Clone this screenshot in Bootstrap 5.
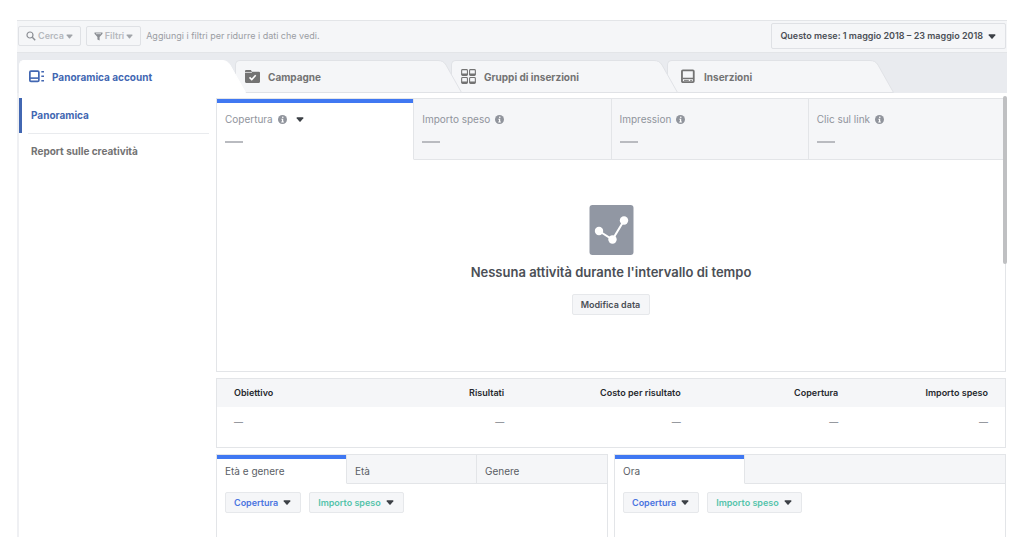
<!DOCTYPE html>
<html lang="it">
<head>
<meta charset="utf-8">
<meta name="viewport" content="width=device-width, initial-scale=1">
<title>Gestione inserzioni</title>
<link href="https://cdn.jsdelivr.net/npm/bootstrap@5.3.0/dist/css/bootstrap.min.css" rel="stylesheet">
<style>
  :root { --line: #e3e5e8; --panel: #f5f6f8; --strip: #e9ebef; --navy: #4267b2; --accent: #4078f2; }
  body { font-family: Inter, "Liberation Sans", sans-serif; font-size: 10px; line-height: 16px; color: #4b4f56; background: #fff; }
  .page { min-height: 100vh; padding: 20px 17px 13px; }
  .toolbar { background: var(--panel); border: solid var(--line); border-width: 1px 0; padding: 2px 1px 3px; gap: 5px; }
  .tool-btn { display: inline-flex; align-items: center; gap: 5px; background: var(--panel); border: 1px solid #dfe1e5; border-radius: 2px; font-size: 9px; line-height: 14px; font-weight: 600; padding: 2px 9px 2px 8px; white-space: nowrap; height: 20px; color: #4b4f56; }
  .tool-btn.muted { color: #b6b9be; padding: 2px 7px; gap: 2px; }
  .tool-btn.muted .caret { width: 7px; color: #a2a5aa; }
  .hint { color: #9a9da3; font-size: 9px; }
  .tool-btn.date-btn { height: 26px; }
  .caret { width: 8px; height: 5px; flex: none; fill: currentColor; }
  .dark-caret { color: #3c4046; }
  .tab-strip { background: var(--strip); padding: 7px 0 0 2px; }
  .level-tab { position: relative; flex: 0 1 228px; height: 33px; margin-right: -12px; color: #737373; font-weight: 700; text-decoration: none; padding-left: 10px; display: flex; align-items: center; }
  .level-tab .shape-body { position: absolute; inset: 0 30px 0 0; background: var(--panel); border: solid #e0e2e6; border-width: 1px 0 1px 1px; border-radius: 5px 0 0 0; }
  .level-tab .shape-cap { position: absolute; right: 0; top: 0; width: 30px; height: 33px; fill: var(--panel); stroke: #e0e2e6; }
  .level-tab.active { color: var(--navy); }
  .level-tab.active .shape-body { background: #fff; border-color: #fff; }
  .level-tab.active .shape-cap { fill: #fff; stroke: #fff; }
  .level-tab .content { position: relative; display: flex; align-items: center; gap: 8px; }
  .level-tab .glyph { width: 15px; height: 15px; }
  .workspace { border-left: 2px solid #eff0f3; padding-top: 5px; }
  .side { width: 197px; flex: none; padding-right: 7px; }
  .side a { display: block; text-decoration: none; font-weight: 700; color: #737373; padding: 9px 0 10px 9px; border-left: 3px solid transparent; }
  .side a.active { color: var(--navy); border-color: var(--navy); }
  .side .rule { height: 1px; background: #e9ebee; margin-left: 9px; }
  .main { min-width: 0; padding-right: 1px; gap: 6px; position: relative; }
  .panel { border: 1px solid var(--line); background: #fff; }
  .scroll-thumb { position: absolute; right: 0; top: -2px; width: 4px; height: 168px; border-radius: 2px; background: #bfc0c2; }
  .metric { flex: 1 1 0; min-width: 0; height: 61px; display: flex; flex-direction: column; justify-content: flex-start; background: var(--panel); border: 0; border-right: 1px solid var(--line); border-bottom: 1px solid var(--line); padding: 12px 8px 0; color: #90949c; }
  .metric:last-child { border-right: 0; }
  .metric .title { display: flex; align-items: center; gap: 5px; }
  .metric .dash { width: 18px; height: 2px; background: #b9bbc0; margin-top: 14px; }
  .metric.active, .break-tab.active { background: #fff; border-bottom-color: #fff; box-shadow: inset 0 4px 0 var(--accent); }
  .info { width: 9px; height: 9px; }
  .empty { padding: 45px 0 56px; }
  .empty .chart { width: 45px; height: 50px; }
  .empty h2 { font-size: 13px; line-height: 18px; font-weight: 600; margin: 8px 0 13px; color: #4b4f56; }
  .results { width: 100%; font-size: 9px; table-layout: fixed; }
  .results th { background: var(--panel); color: #26292e; font-weight: 600; padding: 6px 17px; height: 28px; white-space: nowrap; }
  .results td { padding: 7px 17px 0; height: 40px; vertical-align: top; color: #96999f; font-weight: 600; }
  .results th + th, .results td + td { text-align: right; }
  .break-tab { flex: none; width: 33.333%; height: 29px; text-align: left; border: 0; border-right: 1px solid var(--line); border-bottom: 1px solid var(--line); background: var(--panel); color: #5a5e65; padding: 4px 8px 0; }
  .break-tab:last-child { border-right: 0; }
  .break-rest { flex: 1; background: var(--panel); border-bottom: 1px solid var(--line); }
  .cut { border-bottom: 0; flex: 1 1 0; min-width: 0; }
  .breakdowns { gap: 6px; }
  .tool-btn.pick { border-color: #e6e8eb; height: 21px; }
  .tool-btn.reach { color: #4a74e0; }
  .tool-btn.spend { color: #55c4ab; }
</style>
</head>
<body>
<svg width="0" height="0" class="position-absolute" aria-hidden="true">
  <symbol id="caret" viewBox="0 0 8 5"><path d="M1.200.2h5.600q1 .1.500 1L4.600 4.400q-.6.500-1.200 0L.7 1.200Q.2.300 1.200.2z"/></symbol>
  <symbol id="info" viewBox="0 0 10 10"><circle cx="5" cy="5" r="5" fill="#90949c"/><circle cx="5.300" cy="2.500" r=".9" fill="#fff"/><path d="M3.800 4.200h2v3h.7v1H3.600v-1h.8v-2h-.6z" fill="#fff"/></symbol>
  <symbol id="cap" viewBox="0 0 30 33"><path d="M0 .5H5Q10.500.5 13 5L28.500 32.500H0" /></symbol>
</svg>

<div class="page d-flex flex-column">
  <header class="toolbar d-flex align-items-center">
    <button type="button" class="tool-btn muted">
      <svg width="10" height="10" viewBox="0 0 10 10" fill="none" stroke="#8b8e94" aria-hidden="true"><circle cx="4" cy="4" r="3" stroke-width="1.200"/><path d="M6.300 6.300 9.200 9.200" stroke-width="1.500"/></svg>
      Cerca <svg class="caret"><use href="#caret"/></svg>
    </button>
    <button type="button" class="tool-btn muted">
      <svg width="9" height="9" viewBox="0 0 9 9" aria-hidden="true"><path d="M.5.5h8v1.300L5.600 5v3.500L3.400 7.500V5L.5 1.800z" fill="#8b8e94"/><path d="M2 1.700h5" stroke="#f5f6f8" stroke-width=".7"/></svg>
      Filtri <svg class="caret"><use href="#caret"/></svg>
    </button>
    <span class="hint">Aggiungi i filtri per ridurre i dati che vedi.</span>
    <button type="button" class="tool-btn date-btn ms-auto">Questo mese: 1 maggio 2018 – 23 maggio 2018 <svg class="caret dark-caret"><use href="#caret"/></svg></button>
  </header>

  <nav class="tab-strip d-flex" aria-label="Livelli">
    <a href="#" class="level-tab active z-3" aria-current="page"><span class="shape-body"></span><svg class="shape-cap"><use href="#cap"/></svg>
      <span class="content"><svg class="glyph" viewBox="0 0 14 14" aria-hidden="true"><rect x=".8" y="2" width="8.400" height="9.500" rx="1" fill="none" stroke="currentColor" stroke-width="1.600"/><path d="M1 8.500h8" stroke="currentColor" stroke-width="1.500"/><path d="M11.500 2.500h2.500M11.500 6.700h2.500M11.500 11h2.500" stroke="currentColor" stroke-width="1.500"/></svg>Panoramica account</span></a>
    <a href="#" class="level-tab z-2"><span class="shape-body"></span><svg class="shape-cap"><use href="#cap"/></svg>
      <span class="content"><svg class="glyph" viewBox="0 0 14 14" aria-hidden="true"><path d="M0 2q0-1 1-1h4.500l1 1.500H13q1 0 1 1V12q0 1-1 1H1q-1 0-1-1z" fill="currentColor"/><path d="M0 3.200h6.500" stroke="#f5f6f8" stroke-width=".7"/><path d="m4.200 7.800 2.100 2 3.700-4" fill="none" stroke="#fff" stroke-width="1.500"/></svg>Campagne</span></a>
    <a href="#" class="level-tab z-1"><span class="shape-body"></span><svg class="shape-cap"><use href="#cap"/></svg>
      <span class="content"><svg class="glyph" viewBox="0 0 14 14" fill="none" stroke="currentColor" aria-hidden="true"><rect x=".6" y=".6" width="5.400" height="5.400" rx=".8"/><rect x="8" y=".6" width="5.400" height="5.400" rx=".8"/><rect x=".6" y="8" width="5.400" height="5.400" rx=".8"/><rect x="8" y="8" width="5.400" height="5.400" rx=".8"/><path d="M.6 4.900h5.400M8 4.900h5.400M.6 12.300h5.400M8 12.300h5.400" stroke-width="1.500"/></svg>Gruppi di inserzioni</span></a>
    <a href="#" class="level-tab z-0"><span class="shape-body"></span><svg class="shape-cap"><use href="#cap"/></svg>
      <span class="content ms-1"><svg class="glyph" viewBox="0 0 14 14" fill="none" stroke="currentColor" aria-hidden="true"><rect x=".9" y="1.200" width="11" height="11" rx=".8" stroke-width="1.700"/><path d="M1.500 8.800h10" stroke-width="1.300"/><path d="M2.800 10.600h4.500M8.500 10.600h1.800" stroke-width=".9"/></svg>Inserzioni</span></a>
  </nav>

  <div class="workspace d-flex flex-grow-1">
    <nav class="side" aria-label="Sezioni">
      <a href="#" class="active">Panoramica</a>
      <div class="rule"></div>
      <a href="#">Report sulle creatività</a>
    </nav>

    <main class="main d-flex flex-column flex-grow-1">
      <section class="panel">
        <div class="d-flex">
          <button type="button" class="metric active"><span class="title">Copertura <svg class="info"><use href="#info"/></svg><svg class="caret dark-caret ms-1"><use href="#caret"/></svg></span><span class="dash"></span></button>
          <button type="button" class="metric"><span class="title">Importo speso <svg class="info"><use href="#info"/></svg></span><span class="dash"></span></button>
          <button type="button" class="metric"><span class="title">Impression <svg class="info"><use href="#info"/></svg></span><span class="dash"></span></button>
          <button type="button" class="metric"><span class="title">Clic sul link <svg class="info"><use href="#info"/></svg></span><span class="dash"></span></button>
        </div>
        <div class="empty d-flex flex-column align-items-center">
          <svg class="chart" viewBox="0 0 45 50" aria-hidden="true"><rect x=".5" y="0" width="44" height="50" rx="3" fill="#9197a3"/><path d="m10 26 13.500 8.500L35 15.500" fill="none" stroke="#fff" stroke-width="2"/><circle cx="10" cy="26" r="4.200" fill="#fff"/><circle cx="23.500" cy="34.500" r="4.200" fill="#fff"/><circle cx="35" cy="15.500" r="4.200" fill="#fff"/></svg>
          <h2>Nessuna attività durante l'intervallo di tempo</h2>
          <button type="button" class="tool-btn pick">Modifica data</button>
        </div>
      </section>

      <section class="panel">
        <table class="results">
          <colgroup><col style="width:17%"><col style="width:21.6%"><col style="width:22.4%"><col style="width:20%"><col style="width:19%"></colgroup>
          <thead><tr><th>Obiettivo</th><th>Risultati</th><th>Costo per risultato</th><th>Copertura</th><th>Importo speso</th></tr></thead>
          <tbody><tr><td>—</td><td>—</td><td>—</td><td>—</td><td>—</td></tr></tbody>
        </table>
      </section>

      <div class="breakdowns d-flex flex-grow-1">
        <section class="panel cut">
          <div class="d-flex">
            <button type="button" class="break-tab active">Età e genere</button>
            <button type="button" class="break-tab">Età</button>
            <button type="button" class="break-tab">Genere</button>
          </div>
          <div class="d-flex gap-2 p-2">
            <button type="button" class="tool-btn pick reach">Copertura <svg class="caret dark-caret"><use href="#caret"/></svg></button>
            <button type="button" class="tool-btn pick spend">Importo speso <svg class="caret dark-caret"><use href="#caret"/></svg></button>
          </div>
        </section>
        <section class="panel cut">
          <div class="d-flex">
            <button type="button" class="break-tab active">Ora</button>
            <div class="break-rest"></div>
          </div>
          <div class="d-flex gap-2 p-2">
            <button type="button" class="tool-btn pick reach">Copertura <svg class="caret dark-caret"><use href="#caret"/></svg></button>
            <button type="button" class="tool-btn pick spend">Importo speso <svg class="caret dark-caret"><use href="#caret"/></svg></button>
          </div>
        </section>
      </div>
      <div class="scroll-thumb"></div>
    </main>
  </div>
</div>
<script src="https://cdn.jsdelivr.net/npm/bootstrap@5.3.0/dist/js/bootstrap.bundle.min.js"></script>
</body>
</html>
